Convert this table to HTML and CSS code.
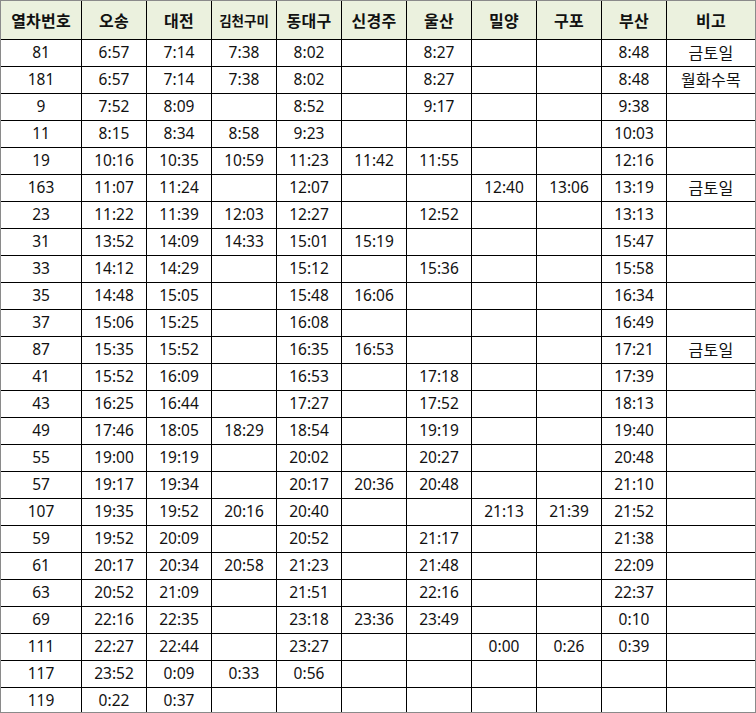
FILE: index.html
```html
<!DOCTYPE html>
<html lang="ko">
<head>
<meta charset="utf-8">
<title>열차 시간표</title>
<link rel="stylesheet" href="styles.css">
</head>
<body>
<div class="frame">
<table class="timetable">
<colgroup>
<col class="c-no"><col class="c-st"><col class="c-st"><col class="c-st"><col class="c-st"><col class="c-st"><col class="c-st"><col class="c-st"><col class="c-st"><col class="c-st"><col class="c-note">
</colgroup>
<thead>
<tr class="head"><th>열차번호</th><th>오송</th><th>대전</th><th class="small">김천구미</th><th>동대구</th><th>신경주</th><th>울산</th><th>밀양</th><th>구포</th><th>부산</th><th>비고</th></tr>
</thead>
<tbody>
<tr><td>81</td><td>6:57</td><td>7:14</td><td>7:38</td><td>8:02</td><td></td><td>8:27</td><td></td><td></td><td>8:48</td><td class="note">금토일</td></tr>
<tr><td>181</td><td>6:57</td><td>7:14</td><td>7:38</td><td>8:02</td><td></td><td>8:27</td><td></td><td></td><td>8:48</td><td class="note">월화수목</td></tr>
<tr><td>9</td><td>7:52</td><td>8:09</td><td></td><td>8:52</td><td></td><td>9:17</td><td></td><td></td><td>9:38</td><td></td></tr>
<tr><td>11</td><td>8:15</td><td>8:34</td><td>8:58</td><td>9:23</td><td></td><td></td><td></td><td></td><td>10:03</td><td></td></tr>
<tr><td>19</td><td>10:16</td><td>10:35</td><td>10:59</td><td>11:23</td><td>11:42</td><td>11:55</td><td></td><td></td><td>12:16</td><td></td></tr>
<tr><td>163</td><td>11:07</td><td>11:24</td><td></td><td>12:07</td><td></td><td></td><td>12:40</td><td>13:06</td><td>13:19</td><td class="note">금토일</td></tr>
<tr><td>23</td><td>11:22</td><td>11:39</td><td>12:03</td><td>12:27</td><td></td><td>12:52</td><td></td><td></td><td>13:13</td><td></td></tr>
<tr><td>31</td><td>13:52</td><td>14:09</td><td>14:33</td><td>15:01</td><td>15:19</td><td></td><td></td><td></td><td>15:47</td><td></td></tr>
<tr><td>33</td><td>14:12</td><td>14:29</td><td></td><td>15:12</td><td></td><td>15:36</td><td></td><td></td><td>15:58</td><td></td></tr>
<tr><td>35</td><td>14:48</td><td>15:05</td><td></td><td>15:48</td><td>16:06</td><td></td><td></td><td></td><td>16:34</td><td></td></tr>
<tr><td>37</td><td>15:06</td><td>15:25</td><td></td><td>16:08</td><td></td><td></td><td></td><td></td><td>16:49</td><td></td></tr>
<tr><td>87</td><td>15:35</td><td>15:52</td><td></td><td>16:35</td><td>16:53</td><td></td><td></td><td></td><td>17:21</td><td class="note">금토일</td></tr>
<tr><td>41</td><td>15:52</td><td>16:09</td><td></td><td>16:53</td><td></td><td>17:18</td><td></td><td></td><td>17:39</td><td></td></tr>
<tr><td>43</td><td>16:25</td><td>16:44</td><td></td><td>17:27</td><td></td><td>17:52</td><td></td><td></td><td>18:13</td><td></td></tr>
<tr><td>49</td><td>17:46</td><td>18:05</td><td>18:29</td><td>18:54</td><td></td><td>19:19</td><td></td><td></td><td>19:40</td><td></td></tr>
<tr><td>55</td><td>19:00</td><td>19:19</td><td></td><td>20:02</td><td></td><td>20:27</td><td></td><td></td><td>20:48</td><td></td></tr>
<tr><td>57</td><td>19:17</td><td>19:34</td><td></td><td>20:17</td><td>20:36</td><td>20:48</td><td></td><td></td><td>21:10</td><td></td></tr>
<tr><td>107</td><td>19:35</td><td>19:52</td><td>20:16</td><td>20:40</td><td></td><td></td><td>21:13</td><td>21:39</td><td>21:52</td><td></td></tr>
<tr><td>59</td><td>19:52</td><td>20:09</td><td></td><td>20:52</td><td></td><td>21:17</td><td></td><td></td><td>21:38</td><td></td></tr>
<tr><td>61</td><td>20:17</td><td>20:34</td><td>20:58</td><td>21:23</td><td></td><td>21:48</td><td></td><td></td><td>22:09</td><td></td></tr>
<tr><td>63</td><td>20:52</td><td>21:09</td><td></td><td>21:51</td><td></td><td>22:16</td><td></td><td></td><td>22:37</td><td></td></tr>
<tr><td>69</td><td>22:16</td><td>22:35</td><td></td><td>23:18</td><td>23:36</td><td>23:49</td><td></td><td></td><td>0:10</td><td></td></tr>
<tr><td>111</td><td>22:27</td><td>22:44</td><td></td><td>23:27</td><td></td><td></td><td>0:00</td><td>0:26</td><td>0:39</td><td></td></tr>
<tr><td>117</td><td>23:52</td><td>0:09</td><td>0:33</td><td>0:56</td><td></td><td></td><td></td><td></td><td></td><td></td></tr>
<tr><td>119</td><td>0:22</td><td>0:37</td><td></td><td></td><td></td><td></td><td></td><td></td><td></td><td></td></tr>
</tbody>
</table>
</div>
</body>
</html>
```
FILE: styles.css
```css
html, body {
  margin: 0;
  padding: 0;
  background: #ffffff;
}

.frame {
  box-sizing: border-box;
  width: 756px;
  height: 713px;
  border: 1px solid #8a8a8a;
  overflow: hidden;
  background: #ffffff;
}

.timetable {
  border-collapse: separate;
  border-spacing: 0;
  table-layout: fixed;
  width: 754px;
  font-family: "Noto Sans", "Noto Sans CJK KR", sans-serif;
  font-size: 15.5px;
  color: #111111;
}

.c-no { width: 81px; }
.c-st { width: 65px; }
.c-note { width: 88px; }

.timetable th,
.timetable td {
  padding: 0;
  border-right: 1px solid #000000;
  border-bottom: 1px solid #000000;
  text-align: center;
  vertical-align: middle;
  white-space: nowrap;
  overflow: hidden;
  line-height: 18px;
}

.timetable th:last-child,
.timetable td:last-child {
  border-right: none;
}

.head {
  height: 39px;
}

.head th {
  background: #ebf1de;
  font-family: "Noto Sans CJK KR", sans-serif;
  font-weight: bold;
  font-size: 16px;
  letter-spacing: 0.2px;
}

.head th.small {
  font-size: 13.5px;
  letter-spacing: 0;
}

.timetable tbody tr {
  height: 27px;
}

.timetable td {
  padding-bottom: 2px;
}

.timetable td.note {
  font-family: "Noto Sans CJK KR", sans-serif;
  font-size: 16px;
  letter-spacing: 0.3px;
}
```
